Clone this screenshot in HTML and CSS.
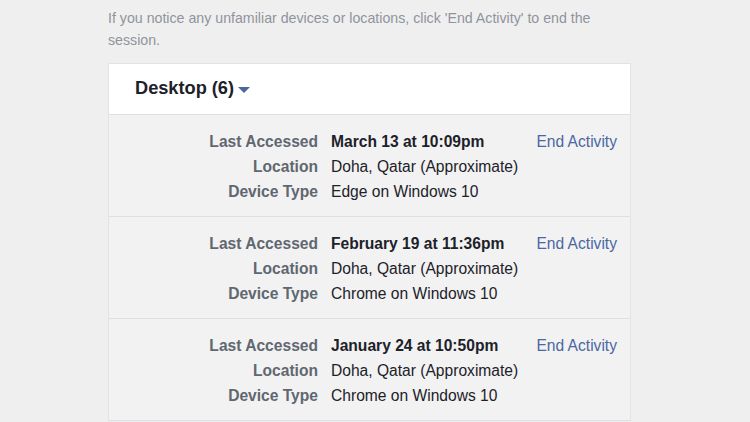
FILE: index.html
```html
<!DOCTYPE html>
<html>
<head>
<meta charset="utf-8">
<link rel="stylesheet" href="styles.css">
</head>
<body>
<div class="page">
  <p class="intro">If you notice any unfamiliar devices or locations, click 'End Activity' to end the session.</p>
  <div class="card">
    <div class="card-head">
      <span class="title">Desktop (6)</span>
      <svg class="caret" width="12" height="6" viewBox="0 0 12 6"><path d="M0 0 H12 L6 6 Z" fill="#4a67a0"/></svg>
    </div>
    <div class="session">
      <dl class="info">
        <dt>Last Accessed</dt><dd class="strong">March 13 at 10:09pm</dd>
        <dt>Location</dt><dd>Doha, Qatar (Approximate)</dd>
        <dt>Device Type</dt><dd>Edge on Windows 10</dd>
      </dl>
      <a class="end" href="#">End Activity</a>
    </div>
    <div class="session">
      <dl class="info">
        <dt>Last Accessed</dt><dd class="strong">February 19 at 11:36pm</dd>
        <dt>Location</dt><dd>Doha, Qatar (Approximate)</dd>
        <dt>Device Type</dt><dd>Chrome on Windows 10</dd>
      </dl>
      <a class="end" href="#">End Activity</a>
    </div>
    <div class="session">
      <dl class="info">
        <dt>Last Accessed</dt><dd class="strong">January 24 at 10:50pm</dd>
        <dt>Location</dt><dd>Doha, Qatar (Approximate)</dd>
        <dt>Device Type</dt><dd>Chrome on Windows 10</dd>
      </dl>
      <a class="end" href="#">End Activity</a>
    </div>
  </div>
</div>
</body>
</html>
```
FILE: styles.css
```css
html, body {
  margin: 0;
  padding: 0;
  background: #efefef;
  font-family: "Liberation Sans", Arial, sans-serif;
  overflow: hidden;
}
.page {
  width: 523px;
  margin: 0 0 0 108px;
  padding-top: 7px;
}
.intro {
  margin: 0 0 12px 0;
  font-size: 14.2px;
  line-height: 22px;
  color: #90949c;
  width: 490px;
}
.card {
  background: #f2f2f2;
  border: 1px solid #e3e3e3;
  border-bottom: 0;
}
.card-head {
  background: #fff;
  height: 50px;
  display: flex;
  align-items: center;
  padding-left: 26px;
  border-bottom: 1px solid #dddfe2;
  gap: 4px;
}
.title {
  font-size: 18.2px;
  font-weight: bold;
  color: #1d2129;
  margin-top: -2px;
}
.caret {
  margin-top: 1px;
}
.session {
  display: flex;
  align-items: flex-start;
  padding: 14px 13px 12px 0;
  border-bottom: 1px solid #dddfe2;
}
.info {
  margin: 0;
  flex: 1;
  display: grid;
  grid-template-columns: 209px 1fr;
  column-gap: 13px;
  font-size: 15.6px;
  line-height: 25px;
}
.info dt {
  text-align: right;
  font-weight: bold;
  color: #606770;
}
.info dd {
  margin: 0;
  color: #1d2129;
}
.info dd.strong {
  font-weight: bold;
}
.end {
  font-size: 15.6px;
  line-height: 25px;
  color: #4b67a1;
  text-decoration: none;
}
```
